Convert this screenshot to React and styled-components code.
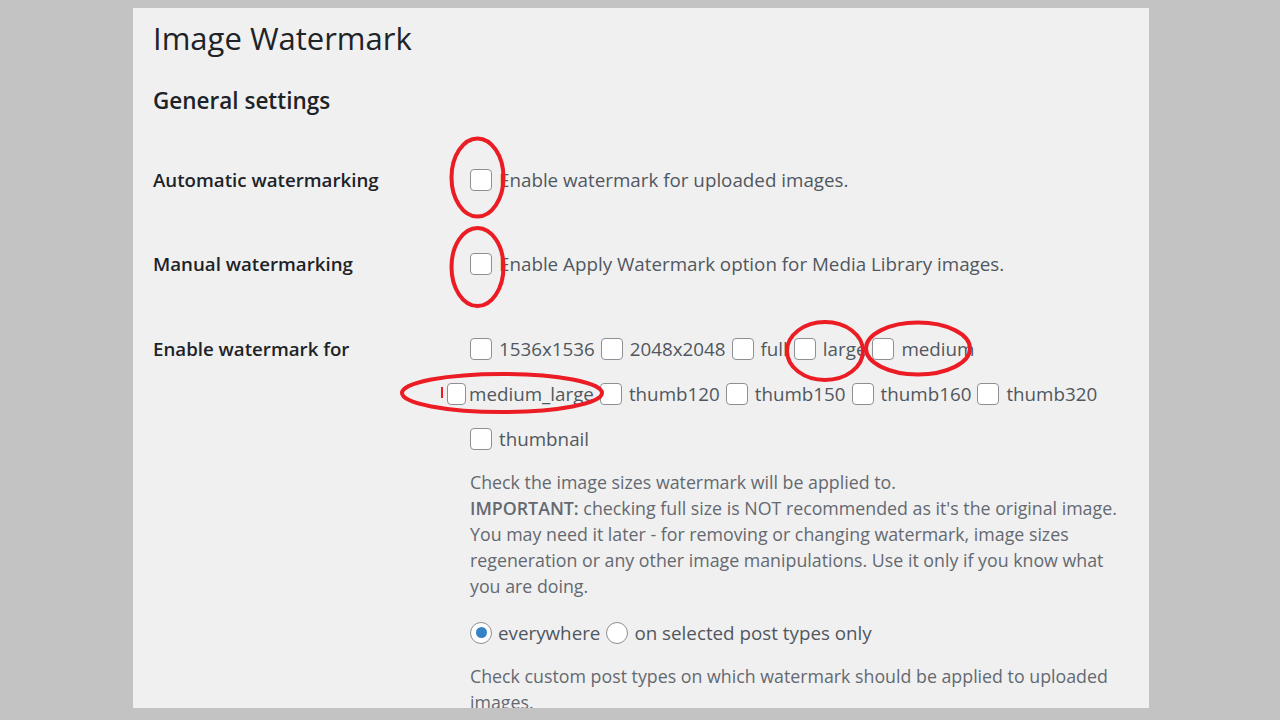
import React from 'react';
import styled, { createGlobalStyle } from 'styled-components';

const GlobalStyle = createGlobalStyle`
  html, body {
    margin: 0;
    padding: 0;
    background: #c3c3c3;
  }
  body {
    font-family: "Open Sans", "Noto Sans", sans-serif;
  }
`;

const Stage = styled.div`
  position: relative;
  width: 1280px;
  height: 720px;
  overflow: hidden;
`;

const Panel = styled.div`
  margin: 8px 0 0 133px;
  width: 1016px;
  height: 700px;
  box-sizing: border-box;
  padding: 0 20px;
  background: #f0f0f1;
  overflow: hidden;
  color: #3c434a;
`;

const Title = styled.h1`
  margin: 8px 0 0;
  font-size: 31px;
  line-height: 44px;
  font-weight: 400;
  color: #1d2327;
`;

const SectionTitle = styled.h2`
  margin: 25px 0 0;
  font-size: 22.5px;
  line-height: 32px;
  font-weight: 600;
  color: #1d2327;
`;

const FormTable = styled.div`
  margin-top: 21px;
`;

const Row = styled.div`
  display: grid;
  grid-template-columns: 317px 1fr;
  align-items: start;
  padding: ${({ $top }) => $top || 28}px 0 28px;
`;

const Label = styled.div`
  font-size: 18.7px;
  line-height: 28px;
  font-weight: 600;
  color: #1d2327;
  padding-top: ${({ $offset }) => $offset || 0}px;
`;

const Field = styled.div`
  display: flex;
  flex-direction: column;
  align-items: flex-start;
  max-width: 658px;
`;

const Option = styled.label`
  display: flex;
  align-items: center;
  height: 28px;
  font-size: 18.8px;
  color: #50575e;
  margin-right: ${({ $gap }) => ($gap == null ? 6 : $gap)}px;
  white-space: nowrap;
`;

const Box = styled.span`
  position: relative;
  display: block;
  width: ${({ $w }) => $w || 22}px;
  height: 22px;
  box-sizing: border-box;
  border: 1px solid #8c8f94;
  border-radius: 4px;
  background: #fff;
  margin-right: ${({ $mr }) => ($mr == null ? 7 : $mr)}px;
  flex-shrink: 0;
`;

const Radio = styled.span`
  position: relative;
  display: block;
  width: 22px;
  height: 22px;
  box-sizing: border-box;
  border: 1px solid #8c8f94;
  border-radius: 50%;
  background: #fff;
  margin-right: 6px;
  flex-shrink: 0;

  &::after {
    content: '';
    display: ${({ $checked }) => ($checked ? 'block' : 'none')};
    position: absolute;
    left: 50%;
    top: 50%;
    width: 11px;
    height: 11px;
    margin: -5.5px 0 0 -5.5px;
    border-radius: 50%;
    background: #3582c4;
  }
`;

const CheckLine = styled.div`
  display: flex;
  align-items: center;
  height: 45px;
  margin-left: ${({ $shift }) => $shift || 0}px;
`;

const Description = styled.p`
  margin: ${({ $mt }) => $mt}px 0 0;
  font-size: 17.8px;
  line-height: 26px;
  color: #646970;

  strong {
    font-weight: 600;
  }
`;

const RadioLine = styled.div`
  display: flex;
  align-items: center;
  height: 28px;
  margin-top: 20px;
`;

const Marks = styled.svg`
  position: absolute;
  left: 0;
  top: 0;
  pointer-events: none;
`;

const lines = [
  ['1536x1536', '2048x2048', 'full', 'large', 'medium'],
  ['medium_large', 'thumb120', 'thumb150', 'thumb160', 'thumb320'],
  ['thumbnail'],
];

function CheckOption({ text, cut }) {
  return (
    <Option $gap={6}>
      <Box $w={cut ? 19 : 22} $mr={cut ? 3 : 7} />
      {text}
    </Option>
  );
}

export default function App() {
  return (
    <Stage>
      <GlobalStyle />
      <Panel>
        <Title>Image Watermark</Title>
        <SectionTitle>General settings</SectionTitle>
        <FormTable>
          <Row>
            <Label>Automatic watermarking</Label>
            <Field>
              <Option>
                <Box />
                Enable watermark for uploaded images.
              </Option>
            </Field>
          </Row>
          <Row>
            <Label>Manual watermarking</Label>
            <Field>
              <Option>
                <Box />
                Enable Apply Watermark option for Media Library images.
              </Option>
            </Field>
          </Row>
          <Row $top={20}>
            <Label $offset={8.5}>Enable watermark for</Label>
            <Field>
              {lines.map((items, i) => (
                <CheckLine key={i} $shift={i === 1 ? -23 : 0}>
                  {items.map((t) => (
                    <CheckOption key={t} text={t} cut={t === 'medium_large'} />
                  ))}
                </CheckLine>
              ))}
              <Description $mt={7.5}>
                Check the image sizes watermark will be applied to.
                <br />
                <strong>IMPORTANT:</strong> checking full size is NOT recommended as it's the original
                image. You may need it later - for removing or changing watermark, image sizes
                regeneration or any other image manipulations. Use it only if you know what you are
                doing.
              </Description>
              <RadioLine>
                <Option>
                  <Radio $checked />
                  everywhere
                </Option>
                <Option>
                  <Radio />
                  on selected post types only
                </Option>
              </RadioLine>
              <Description $mt={16}>
                Check custom post types on which watermark should be applied to uploaded images.
              </Description>
            </Field>
          </Row>
        </FormTable>
      </Panel>

      {/* red annotation rings drawn over the screenshot */}
      <Marks width="1280" height="720" viewBox="0 0 1280 720">
        <g fill="none" stroke="#ec1c24" strokeWidth="4">
          <ellipse cx="477.5" cy="177.5" rx="26" ry="39" />
          <ellipse cx="477.5" cy="267" rx="26" ry="39" />
          <ellipse cx="825" cy="351" rx="38" ry="29" />
          <ellipse cx="918" cy="348.5" rx="52" ry="26" />
          <ellipse cx="502" cy="393" rx="100" ry="19" />
          <line x1="442" y1="387" x2="442" y2="398" strokeWidth="2" />
        </g>
      </Marks>
    </Stage>
  );
}
